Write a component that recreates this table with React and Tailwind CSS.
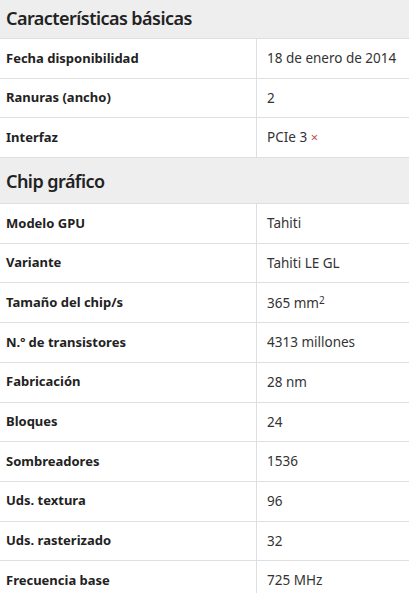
import React from "react";

const font = { fontFamily: '"Noto Sans", "Open Sans", sans-serif' };

function Header({ title, first }) {
  return (
    <div
      className={`bg-[#eeeeee] border-b border-[#dcdfe4] flex items-center px-[6px] ${first ? "h-[39px] pb-[3px]" : "h-[46px]"}`}
    >
      <span className="text-[18px] font-semibold text-[#222] leading-none tracking-[-0.55px]">{title}</span>
    </div>
  );
}

function Row({ label, children }) {
  return (
    <div className="grid grid-cols-[257px_1fr] border-b border-[#dcdfe4] h-[39.7px]">
      <div className="border-r border-[#dcdfe4] flex items-center pl-[6px] text-[13px] font-bold text-[#222]">
        {label}
      </div>
      <div className="flex items-center pl-[10px] text-[13.5px] text-[#333]">{children}</div>
    </div>
  );
}

export default function App() {
  return (
    <div className="w-[409px] h-[593px] overflow-hidden bg-white" style={font}>
      <Header title="Características básicas" first />
      <Row label="Fecha disponibilidad">18 de enero de 2014</Row>
      <Row label="Ranuras (ancho)">2</Row>
      <Row label="Interfaz">
        <span>
          PCIe 3 <span className="text-[#c0504d] text-[13px]">×</span>
        </span>
      </Row>
      <Header title="Chip gráfico" />
      <Row label="Modelo GPU">Tahiti</Row>
      <Row label="Variante">Tahiti LE GL</Row>
      <Row label="Tamaño del chip/s">
        <span>
          365 mm<sup className="text-[10px] relative -top-[4px]">2</sup>
        </span>
      </Row>
      <Row label="N.º de transistores">4313 millones</Row>
      <Row label="Fabricación">28 nm</Row>
      <Row label="Bloques">24</Row>
      <Row label="Sombreadores">1536</Row>
      <Row label="Uds. textura">96</Row>
      <Row label="Uds. rasterizado">32</Row>
      <Row label="Frecuencia base">725 MHz</Row>
    </div>
  );
}
